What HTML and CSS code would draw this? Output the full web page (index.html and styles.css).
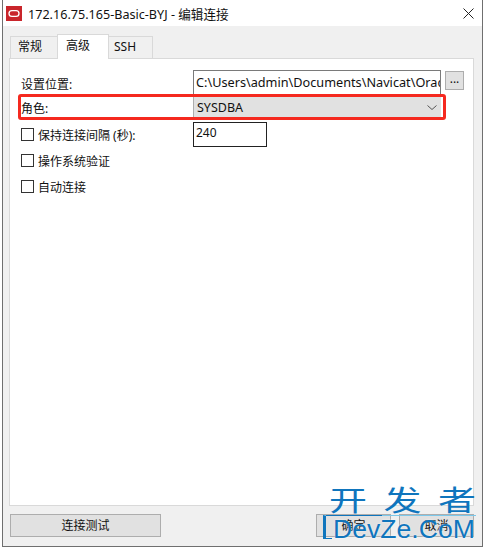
FILE: index.html
```html
<!DOCTYPE html>
<html lang="zh-CN">
<head>
    <meta charset="UTF-8">
    <title>编辑连接</title>
    <link rel="stylesheet" href="styles.css">
</head>
<body>
    <div class="window">
        <div class="title-bar">
            <svg class="app-icon" width="16" height="15" viewBox="0 0 16 15">
                <rect width="16" height="15" fill="#c9252b"/>
                <rect x="3" y="4.6" width="10" height="5.8" rx="2.9" fill="none" stroke="#fff" stroke-width="1.3"/>
            </svg>
            <span class="title-text">172.16.75.165-Basic-BYJ - 编辑连接</span>
            <svg class="close-icon" width="11" height="11" viewBox="0 0 11 11">
                <path d="M0.5 0.5L10.5 10.5M10.5 0.5L0.5 10.5" stroke="#222" stroke-width="1" fill="none"/>
            </svg>
        </div>

        <div class="body">
            <div class="tabs">
                <div class="tab">常规</div>
                <div class="tab active">高级</div>
                <div class="tab">SSH</div>
            </div>

            <div class="panel">
                <div class="row row-location">
                    <span class="row-label">设置位置:</span>
                    <div class="path-box">C:\Users\admin\Documents\Navicat\Oracle\Servers</div>
                    <div class="browse-btn">...</div>
                </div>
                <div class="row row-role">
                    <span class="row-label">角色:</span>
                    <div class="select-box">
                        <span>SYSDBA</span>
                        <svg width="10" height="5" viewBox="0 0 10 5">
                            <path d="M0.5 0.5L5 4.5L9.5 0.5" stroke="#555" stroke-width="1" fill="none"/>
                        </svg>
                    </div>
                    <div class="highlight"></div>
                </div>
                <div class="row row-keep">
                    <label class="check"><span class="check-box"></span>保持连接间隔 (秒):</label>
                    <div class="number-box">240</div>
                </div>
                <div class="row row-check">
                    <label class="check"><span class="check-box"></span>操作系统验证</label>
                </div>
                <div class="row row-check">
                    <label class="check"><span class="check-box"></span>自动连接</label>
                </div>
            </div>

            <div class="footer">
                <div class="btn btn-test">连接测试</div>
                <div class="btn-group">
                    <div class="btn btn-small">确定</div>
                    <div class="btn btn-small">取消</div>
                </div>
            </div>
        </div>
    </div>

    <div class="watermark">
        <div class="wm-cn"><span>开</span><span>发</span><span>者</span></div>
        <div class="wm-en">DevZe.CoM</div>
    </div>
</body>
</html>
```

FILE: styles.css
```css
/* Окно диалога */
html, body {
    height: 100%;
}
body {
    margin: 0;
    background-color: #fff;
    font-family: "Noto Sans", "Noto Sans CJK SC", sans-serif;
    font-size: 12px;
    color: #111;
    overflow: hidden;
}
.window {
    box-sizing: border-box;
    width: 481px;
    height: 547px;
    margin-left: 2px;
    border: 1px solid #6f6f6f;
    border-top: none;
    display: flex;
    flex-direction: column;
    background-color: #f0f0f0;
}
.title-bar {
    height: 26px;
    flex: none;
    display: flex;
    align-items: center;
    background-color: #fff;
    padding: 0 8px 0 3px;
}
.app-icon {
    flex: none;
}
.title-text {
    margin-left: 6px;
    font-size: 12.6px;
    flex: 1;
}
.body {
    flex: 1;
    display: flex;
    flex-direction: column;
    padding: 8px 8px 9px 6px;
    min-height: 0;
}

/* Вкладки */
.tabs {
    display: flex;
    height: 24px;
    flex: none;
    align-items: flex-end;
    padding-left: 1px;
}
.tab {
    box-sizing: border-box;
    height: 22px;
    line-height: 14px;
    padding: 3px 0 0 7px;
    background-color: #f0f0f0;
    border: 1px solid #d9d9d9;
    border-bottom: none;
    margin-left: -1px;
    width: 48px;
}
.tab:first-child {
    margin-left: 0;
}
.tab:last-child {
    width: 45px;
    padding-left: 5px;
}
.tab.active {
    height: 25px;
    width: 52px;
    padding: 4px 0 0 8px;
    background-color: #fff;
    position: relative;
    z-index: 1;
    margin-bottom: -1px;
}
.panel {
    flex: 1;
    background-color: #fff;
    border: 1px solid #d9d9d9;
    padding: 11px 0 0 11px;
    min-height: 0;
}

/* Строки формы */
.row {
    display: flex;
    align-items: center;
    position: relative;
}
.row-label {
    width: 172px;
    flex: none;
}
.row-location {
    height: 27px;
}
.path-box {
    box-sizing: border-box;
    width: 248px;
    height: 27px;
    line-height: 14px;
    font-size: 12.7px;
    flex: none;
    border: 1px solid #7a7a7a;
    border-bottom: none;
    padding: 4px 2px 0;
    overflow: hidden;
    white-space: nowrap;
}
.browse-btn {
    box-sizing: border-box;
    width: 19px;
    height: 19px;
    margin-left: 4px;
    align-self: flex-start;
    margin-top: 1px;
    flex: none;
    background-color: #e1e1e1;
    border: 1px solid #adadad;
    text-align: center;
    line-height: 14px;
}
.row-role {
    height: 21px;
}
.select-box {
    box-sizing: border-box;
    width: 248px;
    height: 21px;
    flex: none;
    display: flex;
    align-items: center;
    justify-content: space-between;
    background-color: #e1e1e1;
    border-left: 1px solid #adadad;
    padding: 0 4px 0 3px;
    font-size: 12.5px;
}
.highlight {
    position: absolute;
    left: -3px;
    top: -3px;
    width: 428px;
    height: 26px;
    border: 3px solid #f5291f;
    border-radius: 3px;
    box-sizing: border-box;
}
.row-keep {
    height: 25px;
    margin-top: 4px;
}
.row-keep .check {
    width: 172px;
    flex: none;
}
.check {
    display: flex;
    align-items: center;
}
.check-box {
    box-sizing: border-box;
    width: 13px;
    height: 13px;
    flex: none;
    margin-right: 4px;
    background-color: #fff;
    border: 1px solid #333;
}
.number-box {
    box-sizing: border-box;
    width: 74px;
    height: 25px;
    line-height: 14px;
    flex: none;
    border: 1px solid #222;
    padding: 3px 2px 0;
}
.row-check {
    height: 13px;
    margin-top: 7px;
}
.row-check + .row-check {
    margin-top: 13px;
}

/* Нижние кнопки */
.footer {
    flex: none;
    height: 31px;
    display: flex;
    align-items: flex-end;
    justify-content: space-between;
    padding-left: 1px;
}
.btn {
    box-sizing: border-box;
    height: 23px;
    background-color: #e1e1e1;
    border: 1px solid #adadad;
    text-align: center;
    line-height: 21px;
}
.btn-test {
    width: 151px;
}
.btn-group {
    display: flex;
    gap: 8px;
}
.btn-small {
    width: 75px;
}

/* Водяной знак */
.watermark {
    position: absolute;
    left: 323px;
    top: 481px;
    width: 153px;
    color: #0f75bd;
}
.wm-cn {
    display: flex;
    justify-content: space-between;
    padding: 0 0 0 6px;
    font-size: 38px;
    line-height: 38px;
    transform: scaleY(0.76);
}
.wm-en {
    box-sizing: border-box;
    position: relative;
    height: 24px;
    margin-top: -4px;
    padding: 1px 0 0 7px;
    border-left: 3px solid #0f75bd;
    border-top: 1px solid #7cc8ea;
    font-family: "Liberation Sans", sans-serif;
    font-size: 26.6px;
    line-height: 24px;
    white-space: nowrap;
    text-shadow: 0 0 2px rgba(255, 255, 255, 0.8);
}
.wm-en::before {
    content: "";
    position: absolute;
    left: 0;
    top: -1px;
    width: 56px;
    border-top: 1px solid #0f75bd;
}
.wm-en::after {
    content: "";
    position: absolute;
    left: 0;
    bottom: 0;
    width: 6px;
    border-bottom: 1px solid #0f75bd;
}
```
